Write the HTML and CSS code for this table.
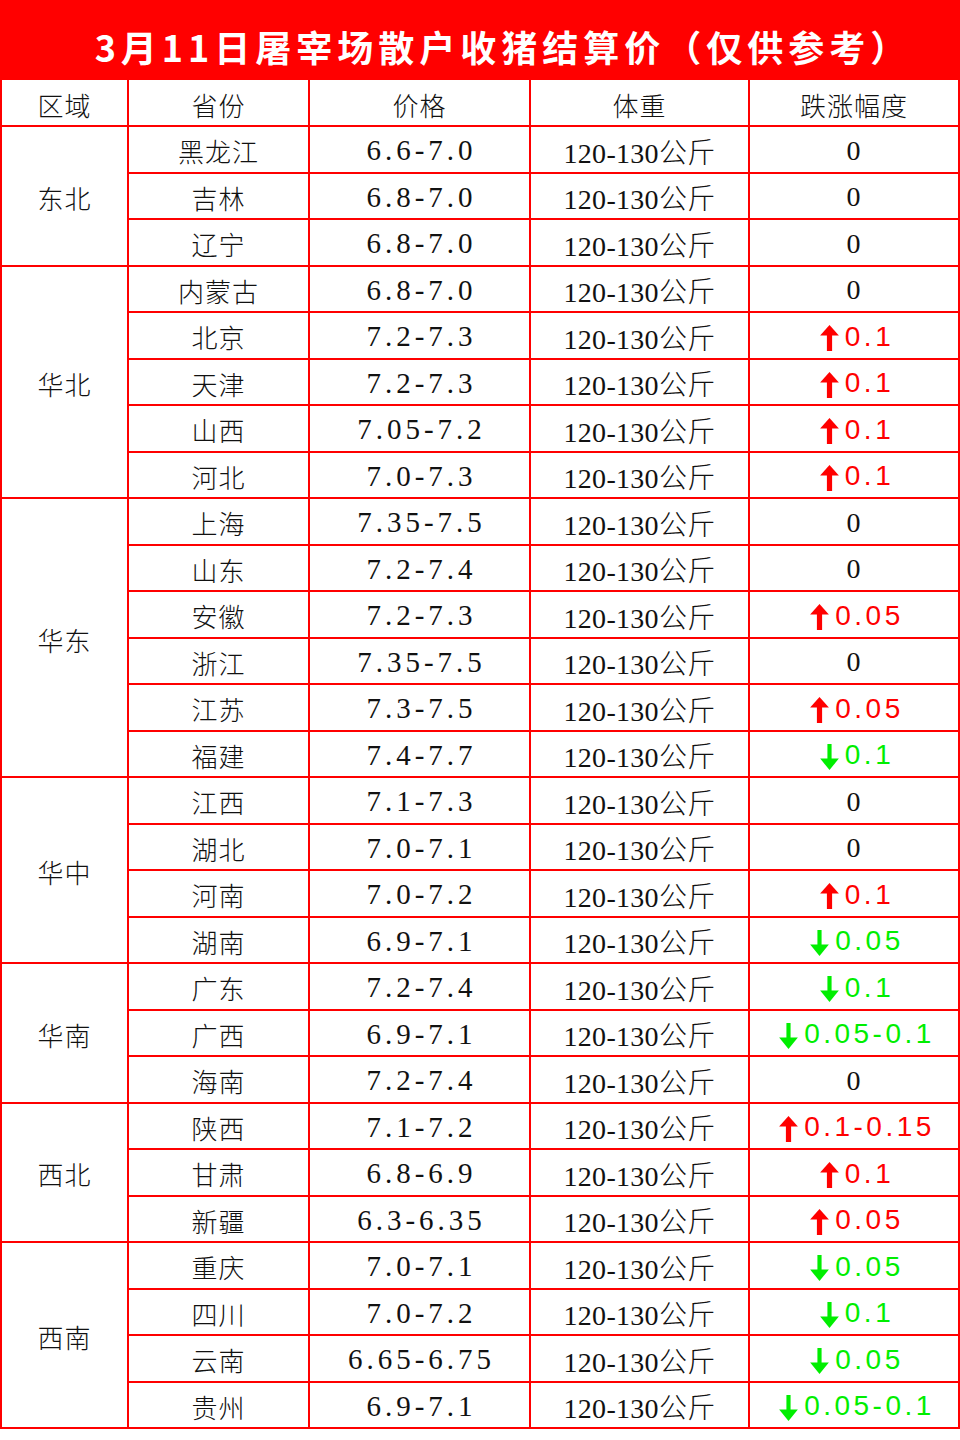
FILE: index.html
```html
<!DOCTYPE html>
<html lang="zh-CN">
<head>
<meta charset="utf-8">
<title>3月11日屠宰场散户收猪结算价</title>
<link rel="stylesheet" href="styles.css">
</head>
<body>
<div class="sheet">
  <div class="title">3月11日屠宰场散户收猪结算价（仅供参考）</div>
  <div class="grid">
    <div class="cell c1 head">区域</div>
    <div class="cell c2 head">省份</div>
    <div class="cell c3 head">价格</div>
    <div class="cell c4 head">体重</div>
    <div class="cell c5 head">跌涨幅度</div>

    <div class="cell c1 region span3">东北</div>
    <div class="cell c2">黑龙江</div><div class="cell c3 price">6.6-7.0</div><div class="cell c4 wt">120-130公斤</div><div class="cell c5 flat">0</div>
    <div class="cell c2">吉林</div><div class="cell c3 price">6.8-7.0</div><div class="cell c4 wt">120-130公斤</div><div class="cell c5 flat">0</div>
    <div class="cell c2">辽宁</div><div class="cell c3 price">6.8-7.0</div><div class="cell c4 wt">120-130公斤</div><div class="cell c5 flat">0</div>

    <div class="cell c1 region span5">华北</div>
    <div class="cell c2">内蒙古</div><div class="cell c3 price">6.8-7.0</div><div class="cell c4 wt">120-130公斤</div><div class="cell c5 flat">0</div>
    <div class="cell c2">北京</div><div class="cell c3 price">7.2-7.3</div><div class="cell c4 wt">120-130公斤</div><div class="cell c5 moved"><span class="chg up"><svg class="arrow" viewBox="0 0 18 25"><polygon points="9,0 18,10 0,10"/><rect x="6.5" y="9" width="5" height="16"/></svg>0.1</span></div>
    <div class="cell c2">天津</div><div class="cell c3 price">7.2-7.3</div><div class="cell c4 wt">120-130公斤</div><div class="cell c5 moved"><span class="chg up"><svg class="arrow" viewBox="0 0 18 25"><polygon points="9,0 18,10 0,10"/><rect x="6.5" y="9" width="5" height="16"/></svg>0.1</span></div>
    <div class="cell c2">山西</div><div class="cell c3 price">7.05-7.2</div><div class="cell c4 wt">120-130公斤</div><div class="cell c5 moved"><span class="chg up"><svg class="arrow" viewBox="0 0 18 25"><polygon points="9,0 18,10 0,10"/><rect x="6.5" y="9" width="5" height="16"/></svg>0.1</span></div>
    <div class="cell c2">河北</div><div class="cell c3 price">7.0-7.3</div><div class="cell c4 wt">120-130公斤</div><div class="cell c5 moved"><span class="chg up"><svg class="arrow" viewBox="0 0 18 25"><polygon points="9,0 18,10 0,10"/><rect x="6.5" y="9" width="5" height="16"/></svg>0.1</span></div>

    <div class="cell c1 region span6">华东</div>
    <div class="cell c2">上海</div><div class="cell c3 price">7.35-7.5</div><div class="cell c4 wt">120-130公斤</div><div class="cell c5 flat">0</div>
    <div class="cell c2">山东</div><div class="cell c3 price">7.2-7.4</div><div class="cell c4 wt">120-130公斤</div><div class="cell c5 flat">0</div>
    <div class="cell c2">安徽</div><div class="cell c3 price">7.2-7.3</div><div class="cell c4 wt">120-130公斤</div><div class="cell c5 moved"><span class="chg up"><svg class="arrow" viewBox="0 0 18 25"><polygon points="9,0 18,10 0,10"/><rect x="6.5" y="9" width="5" height="16"/></svg>0.05</span></div>
    <div class="cell c2">浙江</div><div class="cell c3 price">7.35-7.5</div><div class="cell c4 wt">120-130公斤</div><div class="cell c5 flat">0</div>
    <div class="cell c2">江苏</div><div class="cell c3 price">7.3-7.5</div><div class="cell c4 wt">120-130公斤</div><div class="cell c5 moved"><span class="chg up"><svg class="arrow" viewBox="0 0 18 25"><polygon points="9,0 18,10 0,10"/><rect x="6.5" y="9" width="5" height="16"/></svg>0.05</span></div>
    <div class="cell c2">福建</div><div class="cell c3 price">7.4-7.7</div><div class="cell c4 wt">120-130公斤</div><div class="cell c5 moved"><span class="chg down"><svg class="arrow" viewBox="0 0 18 25"><rect x="7" y="0" width="4" height="15"/><polygon points="0,14 18,14 9,25"/></svg>0.1</span></div>

    <div class="cell c1 region span4">华中</div>
    <div class="cell c2">江西</div><div class="cell c3 price">7.1-7.3</div><div class="cell c4 wt">120-130公斤</div><div class="cell c5 flat">0</div>
    <div class="cell c2">湖北</div><div class="cell c3 price">7.0-7.1</div><div class="cell c4 wt">120-130公斤</div><div class="cell c5 flat">0</div>
    <div class="cell c2">河南</div><div class="cell c3 price">7.0-7.2</div><div class="cell c4 wt">120-130公斤</div><div class="cell c5 moved"><span class="chg up"><svg class="arrow" viewBox="0 0 18 25"><polygon points="9,0 18,10 0,10"/><rect x="6.5" y="9" width="5" height="16"/></svg>0.1</span></div>
    <div class="cell c2">湖南</div><div class="cell c3 price">6.9-7.1</div><div class="cell c4 wt">120-130公斤</div><div class="cell c5 moved"><span class="chg down"><svg class="arrow" viewBox="0 0 18 25"><rect x="7" y="0" width="4" height="15"/><polygon points="0,14 18,14 9,25"/></svg>0.05</span></div>

    <div class="cell c1 region span3">华南</div>
    <div class="cell c2">广东</div><div class="cell c3 price">7.2-7.4</div><div class="cell c4 wt">120-130公斤</div><div class="cell c5 moved"><span class="chg down"><svg class="arrow" viewBox="0 0 18 25"><rect x="7" y="0" width="4" height="15"/><polygon points="0,14 18,14 9,25"/></svg>0.1</span></div>
    <div class="cell c2">广西</div><div class="cell c3 price">6.9-7.1</div><div class="cell c4 wt">120-130公斤</div><div class="cell c5 moved"><span class="chg down"><svg class="arrow" viewBox="0 0 18 25"><rect x="7" y="0" width="4" height="15"/><polygon points="0,14 18,14 9,25"/></svg>0.05-0.1</span></div>
    <div class="cell c2">海南</div><div class="cell c3 price">7.2-7.4</div><div class="cell c4 wt">120-130公斤</div><div class="cell c5 flat">0</div>

    <div class="cell c1 region span3">西北</div>
    <div class="cell c2">陕西</div><div class="cell c3 price">7.1-7.2</div><div class="cell c4 wt">120-130公斤</div><div class="cell c5 moved"><span class="chg up"><svg class="arrow" viewBox="0 0 18 25"><polygon points="9,0 18,10 0,10"/><rect x="6.5" y="9" width="5" height="16"/></svg>0.1-0.15</span></div>
    <div class="cell c2">甘肃</div><div class="cell c3 price">6.8-6.9</div><div class="cell c4 wt">120-130公斤</div><div class="cell c5 moved"><span class="chg up"><svg class="arrow" viewBox="0 0 18 25"><polygon points="9,0 18,10 0,10"/><rect x="6.5" y="9" width="5" height="16"/></svg>0.1</span></div>
    <div class="cell c2">新疆</div><div class="cell c3 price">6.3-6.35</div><div class="cell c4 wt">120-130公斤</div><div class="cell c5 moved"><span class="chg up"><svg class="arrow" viewBox="0 0 18 25"><polygon points="9,0 18,10 0,10"/><rect x="6.5" y="9" width="5" height="16"/></svg>0.05</span></div>

    <div class="cell c1 region span4">西南</div>
    <div class="cell c2">重庆</div><div class="cell c3 price">7.0-7.1</div><div class="cell c4 wt">120-130公斤</div><div class="cell c5 moved"><span class="chg down"><svg class="arrow" viewBox="0 0 18 25"><rect x="7" y="0" width="4" height="15"/><polygon points="0,14 18,14 9,25"/></svg>0.05</span></div>
    <div class="cell c2">四川</div><div class="cell c3 price">7.0-7.2</div><div class="cell c4 wt">120-130公斤</div><div class="cell c5 moved"><span class="chg down"><svg class="arrow" viewBox="0 0 18 25"><rect x="7" y="0" width="4" height="15"/><polygon points="0,14 18,14 9,25"/></svg>0.1</span></div>
    <div class="cell c2">云南</div><div class="cell c3 price">6.65-6.75</div><div class="cell c4 wt">120-130公斤</div><div class="cell c5 moved"><span class="chg down"><svg class="arrow" viewBox="0 0 18 25"><rect x="7" y="0" width="4" height="15"/><polygon points="0,14 18,14 9,25"/></svg>0.05</span></div>
    <div class="cell c2">贵州</div><div class="cell c3 price">6.9-7.1</div><div class="cell c4 wt">120-130公斤</div><div class="cell c5 moved"><span class="chg down"><svg class="arrow" viewBox="0 0 18 25"><rect x="7" y="0" width="4" height="15"/><polygon points="0,14 18,14 9,25"/></svg>0.05-0.1</span></div>
  </div>
</div>
</body>
</html>
```

FILE: styles.css
```css
* { box-sizing: border-box; }

html, body {
  margin: 0;
  padding: 0;
  background: #ffffff;
}

.sheet {
  width: 960px;
}

.title {
  height: 80px;
  background: #ff0000;
  color: #ffffff;
  font-family: "Noto Sans CJK SC", "Noto Sans", sans-serif;
  font-weight: 700;
  font-size: 36px;
  letter-spacing: 5px;
  display: flex;
  align-items: center;
  justify-content: center;
  padding-top: 12px;
  padding-left: 46px;
  white-space: nowrap;
}

.grid {
  display: grid;
  grid-template-columns: 127px 181px 221px 219px 210px;
  grid-template-rows: 47px repeat(28, 46.5px);
  border-left: 2px solid #ff0000;
  color: #111111;
}

.cell {
  border-right: 2px solid #ff0000;
  border-bottom: 2px solid #ff0000;
  display: flex;
  align-items: center;
  justify-content: center;
  font-family: "Noto Sans CJK SC", sans-serif;
  font-weight: 300;
  font-size: 26px;
  letter-spacing: 1px;
  padding-top: 3px;
  white-space: nowrap;
}

.c1 { grid-column: 1; }
.c2 { grid-column: 2; }
.c3 { grid-column: 3; }
.c4 { grid-column: 4; }
.c5 { grid-column: 5; }

.span3 { grid-row: span 3; }
.span4 { grid-row: span 4; }
.span5 { grid-row: span 5; }
.span6 { grid-row: span 6; }

.price {
  font-family: "Liberation Serif", serif;
  font-weight: 400;
  font-size: 29px;
  letter-spacing: 4px;
  padding-left: 4px;
}

.wt {
  font-family: "Liberation Serif", "Noto Sans CJK SC", serif;
  font-size: 28px;
  letter-spacing: 0.3px;
}

.flat {
  font-family: "Liberation Serif", serif;
  font-weight: 400;
  font-size: 28px;
}

.moved {
  padding-left: 6px;
}

.chg {
  display: inline-flex;
  align-items: center;
  gap: 6px;
  font-family: "Liberation Sans", "Noto Sans", sans-serif;
  font-weight: 400;
  font-size: 28px;
  letter-spacing: 3.5px;
  line-height: 1;
}

.arrow {
  width: 19px;
  height: 26px;
  flex: none;
  margin-top: 3px;
}

.up { color: #ff0000; }
.up .arrow { fill: #ff0000; }

.down { color: #00ee00; }
.down .arrow { fill: #00ee00; }
```
